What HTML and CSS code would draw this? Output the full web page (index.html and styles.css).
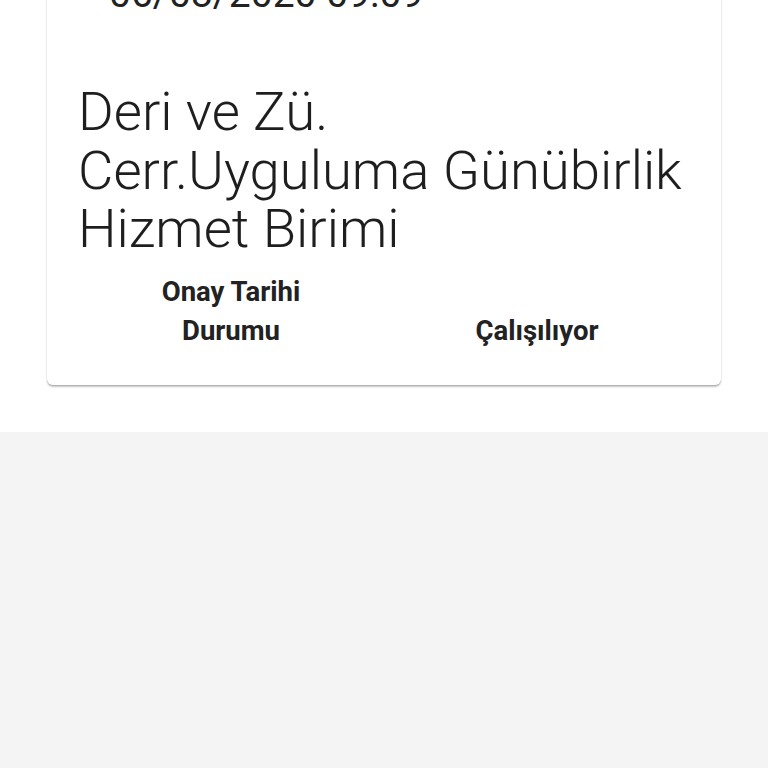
FILE: index.html
```html
<!DOCTYPE html>
<html>
<head>
    <title>Başvuru Detayı</title>
    <link rel="stylesheet" href="styles.css">
</head>
<body>
    <div class="page-top">
        <div class="card">
            <div class="card-date">06/08/2020 09:09</div>
            <h1 class="unit-name">Deri ve Zü.<br>Cerr.Uyguluma Günübirlik Hizmet Birimi</h1>
            <div class="info-list">
                <div class="info-row">
                    <div class="info-label">Onay Tarihi</div>
                    <div class="info-value"></div>
                </div>
                <div class="info-row">
                    <div class="info-label">Durumu</div>
                    <div class="info-value">Çalışılıyor</div>
                </div>
            </div>
        </div>
    </div>
    <div class="page-bottom"></div>
</body>
</html>
```

FILE: styles.css
```css
html, body {
    margin: 0;
    padding: 0;
    height: 100%;
    overflow: hidden;
}
body {
    font-family: Roboto, "Liberation Sans", sans-serif;
    color: #212121;
    background: #f4f4f4;
    display: flex;
    flex-direction: column;
}
.page-top {
    background: #fff;
    padding: 0 47px 47px 47px;
}
.card {
    margin-top: -40px;
    background: #fff;
    border-radius: 6px;
    box-shadow: 0 1px 1px rgba(0,0,0,0.12), 0 2px 2px rgba(0,0,0,0.22);
    padding: 12px 31px 35px 31px;
}
.card-date {
    font-size: 39px;
    line-height: 44px;
    padding-left: 31px;
    color: #222;
}
.unit-name {
    margin: 66px 0 0 0;
    font-size: 54.5px;
    font-weight: 300;
    line-height: 58.6px;
    color: #1e1e1e;
}
.info-list {
    margin-top: 14px;
}
.info-row {
    display: flex;
    height: 39px;
    align-items: center;
}
.info-label, .info-value {
    flex: 1;
    text-align: center;
    font-size: 27.5px;
    font-weight: 700;
    color: #222;
}
.page-bottom {
    flex: 1;
}
```
